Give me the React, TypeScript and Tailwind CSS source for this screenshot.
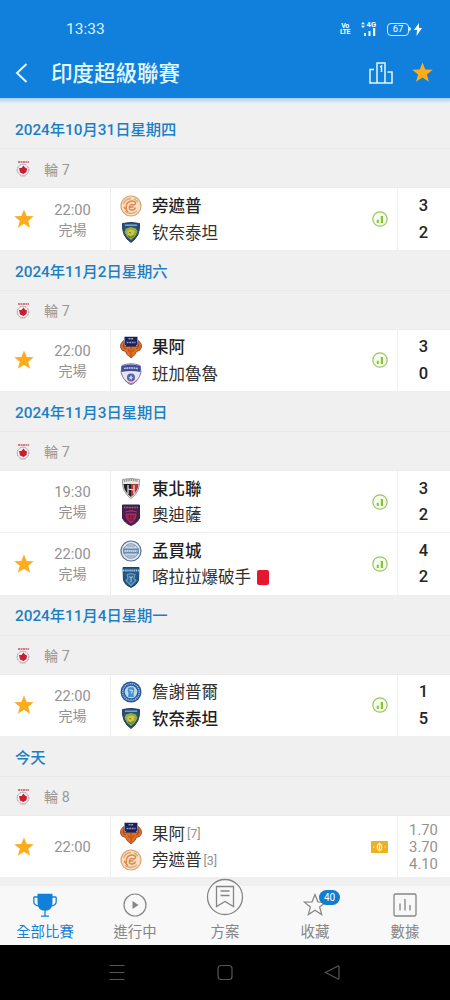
import React from 'react';

type Crest = 'punjab' | 'chennai' | 'goa' | 'bengaluru' | 'northeast' | 'odisha' | 'mumbai' | 'kerala' | 'jamshedpur';

interface Team {
  name: string;
  crest: Crest;
  winner?: boolean;
  redCard?: boolean;
  rank?: number;
}

interface Match {
  time: string;
  starred: boolean;
  home: Team;
  away: Team;
  score?: [number, number];
  odds?: string[];
}

interface Day {
  date: string;
  round: string;
  matches: Match[];
}

const days: Day[] = [
  {
    date: '2024年10月31日星期四',
    round: '輪 7',
    matches: [
      {
        time: '22:00',
        starred: true,
        home: { name: '旁遮普', crest: 'punjab', winner: true },
        away: { name: '钦奈泰坦', crest: 'chennai' },
        score: [3, 2]
      }
    ]
  },
  {
    date: '2024年11月2日星期六',
    round: '輪 7',
    matches: [
      {
        time: '22:00',
        starred: true,
        home: { name: '果阿', crest: 'goa', winner: true },
        away: { name: '班加魯魯', crest: 'bengaluru' },
        score: [3, 0]
      }
    ]
  },
  {
    date: '2024年11月3日星期日',
    round: '輪 7',
    matches: [
      {
        time: '19:30',
        starred: false,
        home: { name: '東北聯', crest: 'northeast', winner: true },
        away: { name: '奧迪薩', crest: 'odisha' },
        score: [3, 2]
      },
      {
        time: '22:00',
        starred: true,
        home: { name: '孟買城', crest: 'mumbai', winner: true },
        away: { name: '喀拉拉爆破手', crest: 'kerala', redCard: true },
        score: [4, 2]
      }
    ]
  },
  {
    date: '2024年11月4日星期一',
    round: '輪 7',
    matches: [
      {
        time: '22:00',
        starred: true,
        home: { name: '詹謝普爾', crest: 'jamshedpur' },
        away: { name: '钦奈泰坦', crest: 'chennai', winner: true },
        score: [1, 5]
      }
    ]
  },
  {
    date: '今天',
    round: '輪 8',
    matches: [
      {
        time: '22:00',
        starred: true,
        home: { name: '果阿', crest: 'goa', rank: 7 },
        away: { name: '旁遮普', crest: 'punjab', rank: 3 },
        odds: ['1.70', '3.70', '4.10']
      }
    ]
  }
];

const SHIELD = 'M2.5 2.5Q11 .5 19.500 2.500Q20.500 15 11 21.500Q1.500 15 2.500 2.500Z';

const crests: Record<Crest, React.ReactNode> = {
  punjab: (
    <>
      <circle cx="11" cy="11" r="10" fill="#f5dfc6" stroke="#dca46c" strokeWidth="1.200" />
      <path d="M3.500 9Q5 4 11 3.500M5 16.500Q11 20.500 17 16" fill="none" stroke="#e8a970" strokeWidth="1.500" />
      <path d="M6.500 14q-1-6 3-7.500t6 1q.5 2-2 2.500-3-1.500-4 1.500t2 3.500q3 .5 4-2.500M4 12l4 5M9.500 12h4" fill="none" stroke="#de8747" strokeWidth="1.400" />
      <path d="M14 3.500l4 3.500" stroke="#b9bd74" strokeWidth="1.500" />
    </>
  ),
  chennai: (
    <>
      <path d={SHIELD} fill="#245079" stroke="#243b5c" />
      <path d="M5 4.200h12" stroke="#7fa9c9" strokeWidth="1.500" />
      <path d="M6 7.500l5-1.500 5 1.500 1.500 3.500-2.500 4.500-4 3.500-4-3.500-2.500-4.500z" fill="#9bad3a" />
      <path d="M7.500 10l3-1.500 4 1-1 4-3 1.500-3-2z" fill="#d0c843" />
      <path d="M9 11.500l2 .5M8 15l3 1.500 3-2" fill="none" stroke="#5f7d48" strokeWidth="1.100" />
    </>
  ),
  goa: (
    <>
      <path d="M3.500 4.500Q-.5 8 .5 11.500q1 3.500 5 4l1.500 3 4 3.500 4-3.500 1.500-3q4-.5 5-4 1-3.500-3-7l-1 6H4.500z" fill="#e66d1e" stroke="#6e3a2c" strokeWidth=".7" />
      <path d="M4 8q-2 3 1.500 5M18 8q2 3-1.500 5" fill="none" stroke="#7c402b" />
      <path d="M4.500 .8h13V7.500L16 10.500H6L4.500 7.500z" fill="#1c2258" />
      <path d="M8.500 2.800h5M6.500 6.500h9" stroke="#8f99c7" strokeWidth="1.500" strokeDasharray="2 .6" />
      <path d="M11 11v10M8 13l1.500 3M14 13l-1.500 3" stroke="#a04d27" strokeWidth=".9" />
    </>
  ),
  bengaluru: (
    <>
      <path d="M2 2.500Q11-1 20 2.500L21 9Q19 18 11 22 3 18 1 9z" fill="#e6e5ef" stroke="#777bb0" />
      <path d="M1.500 3Q11 0 20.500 3v6Q11 7 1.500 9z" fill="#424d99" />
      <path d="M4 5.500q7-1 14 0" fill="none" stroke="#c9cce8" strokeWidth="1.600" strokeDasharray="1.800 .6" />
      <circle cx="11" cy="14.500" r="4" fill="#5265a6" />
      <path d="M11 12l1 2h2l-2 1v2l-1-1-2 1 1-2-2-1h2z" fill="#cdd5ee" />
      <path d="M5 17q6 7 12 0" fill="none" stroke="#d45268" />
    </>
  ),
  northeast: (
    <>
      <path d={SHIELD} fill="#e9e7e4" stroke="#858585" strokeWidth=".8" />
      <path d="M4 4q7-2 14 0" fill="none" stroke="#8a8a8a" strokeWidth="2.200" strokeDasharray="1 .8" />
      <path d="M3.500 7H11v13Q4 15 3.500 7z" fill="#242124" />
      <path d="M11 7h7.500Q18 15 11 20z" fill="#b9333b" />
      <path d="M8 8v9M14 8v9M8 12l6 1" stroke="#f2e9e7" strokeWidth="1.200" />
    </>
  ),
  odisha: (
    <>
      <path d="M2.500 1h17v13q-2 5-8.500 7.500Q4.500 19 2.500 14z" fill="#46204e" stroke="#39204c" />
      <path d="M4 3.500h14" stroke="#987199" strokeWidth="1.500" strokeDasharray="1 .6" />
      <path d="M5 8q6-3 12 0M6 10q0 6 5 9 5-3 5-9z" fill="#9a2353" stroke="#bd2c5c" />
      <path d="M9 11l1 3M13 11l-1 3M9 16h4" stroke="#5b2049" strokeWidth="1.200" />
    </>
  ),
  mumbai: (
    <>
      <circle cx="11" cy="11" r="10" fill="#dfe9f3" stroke="#5e718a" strokeWidth="1.200" />
      <circle cx="11" cy="11" r="7.300" fill="#c3d5e7" stroke="#8299b4" />
      <path d="M3 8.500h16v5H3z" fill="#6a8bae" />
      <path d="M4.500 11h13" stroke="#e9eff6" strokeWidth="1.400" strokeDasharray="1.500 .5" />
      <path d="M7 16h8M7 6h8" stroke="#8a9db4" />
    </>
  ),
  kerala: (
    <>
      <path d="M3 1.500h16l-.5 13Q17 19 11 21.500 5 19 3.500 14.500z" fill="#225684" stroke="#16446b" />
      <path d="M3 4.500h16" stroke="#a2c5d9" strokeWidth="2.200" strokeDasharray="1.500 .6" />
      <path d="M7 8.500l4-1 4 1-1 4 2 2-5 5-5-5 2-2z" fill="#2f6a9d" stroke="#6b9fc6" strokeWidth="1.100" />
      <path d="M9 10.500l2 1 2-1M11 11.500v5" fill="none" stroke="#a9cbe0" />
    </>
  ),
  jamshedpur: (
    <>
      <circle cx="11" cy="11" r="10.500" fill="#23599b" />
      <circle cx="11" cy="11" r="8.300" fill="none" stroke="#a4c3de" strokeWidth="1.400" strokeDasharray="1.200 .7" />
      <circle cx="11" cy="11" r="6.300" fill="#bbdaf0" />
      <path d="M8 7q3-2 6 0 1 3-.5 5l.5 4H8l.5-4Q7 10 8 7z" fill="#4a93cf" />
      <path d="M9.500 9l3 .5-1 3" stroke="#dff1fb" fill="none" />
    </>
  )
};

const STAR = 'M12 1.500l2.900 7.300 7.800.3-6.100 4.900 2.100 7.600-6.700-4.300-6.700 4.300 2.100-7.600-6.100-4.900 7.800-.3z';

const Star = ({ className }: { className: string }) => (
  <svg viewBox="0 0 24 24" className={className} fill="#ffac1c">
    <path d={STAR} />
  </svg>
);

const StatusBar = () => (
  <div className="flex h-[47px] items-start justify-between pl-[66px] pr-7 pt-5 text-white">
    <span className="text-[15.5px] leading-[18px] text-[#d9f1ff]">13:33</span>
    <div className="flex items-center pt-0.5">
      <div className="mr-[7px] flex w-[10px] flex-col items-center text-[7px] font-bold leading-[6.5px] tracking-[-0.4px]">
        <span>Vo</span>
        <span>LTE</span>
      </div>
      <div className="mr-[7px] flex w-[23px] flex-col items-end pr-1 text-[7.5px] font-bold leading-[6px]">
        <span className="flex items-center gap-0.5">
          <svg viewBox="0 0 4 6" className="h-1.5 w-1" fill="currentColor">
            <path d="M2 0l2 2.300H0zM2 6L0 3.700h4z" />
          </svg>
          4G
        </span>
        <svg viewBox="0 0 12 8" className="h-2 w-3" fill="currentColor">
          <path d="M0 5h2v3H0zM4.500 3h2v5h-2zM9 0h2.200v8H9z" />
        </svg>
      </div>
      <div className="flex h-[13px] w-[22px] items-center justify-center rounded-[4px] border border-[#c5edff] text-[9.5px] leading-none">67</div>
      <div className="mr-[3px] h-1 w-0.5 rounded-r bg-[#c5edff]"></div>
      <svg viewBox="0 0 8 13" className="h-[13px] w-2" fill="currentColor">
        <path d="M5 0L0 7h3L2.500 13 8 5H5z" />
      </svg>
    </div>
  </div>
);

const Header = () => (
  <header className="h-[98px] shrink-0 bg-[#1080dc]">
    <StatusBar />
    <div className="flex h-[51px] items-center pl-[15px] pr-4 text-[#e2f7ff]">
      <svg viewBox="0 0 13 20" className="h-5 w-[13px]" fill="none" stroke="currentColor" strokeWidth="2">
        <path d="M11.500 1L2 10l9.500 9" />
      </svg>
      <h1 className="ml-[23px] flex-1 pt-[3px] text-[21.5px] font-medium leading-none">印度超級聯賽</h1>
      <svg viewBox="0 0 24 22" className="mr-[18px] h-[22px] w-6" fill="none" stroke="currentColor" strokeWidth="1.500">
        <path d="M8 21V1h8v20M5 7.500H1V21h22V10h-4.500M11 5l1.500-1v6" />
      </svg>
      <Star className="h-[23px] w-[23px]" />
    </div>
  </header>
);

const LeagueLogo = () => (
  <svg viewBox="0 0 14 18" className="h-[18px] w-[14px]">
    <path d="M2 2h11" stroke="#cc5360" strokeWidth="1.600" strokeDasharray="2 .5" />
    <circle cx="7" cy="10" r="5.800" fill="#f7efef" stroke="#8d898f" strokeWidth="1" strokeDasharray="1.200 .6" />
    <path d="M3 8l2.500 0L7.500 5.500l1.500 2 2 1-.5 3.500-3 2-3.500-1.500z" fill="#c91e32" />
    <path d="M4 16q3 1 6 0" fill="none" stroke="#dec9cb" />
  </svg>
);

const StatsBadge = () => (
  <svg viewBox="0 0 16 16" className="h-4 w-4">
    <circle cx="8" cy="8" r="7.200" fill="#f6fceb" stroke="#9bc366" strokeWidth="1.200" />
    <path d="M4.800 8.700h2V12h-2zM8.800 5h2.200v7H8.800z" fill="#87c336" />
  </svg>
);

const OddsBadge = () => (
  <svg viewBox="0 0 17 12" className="h-3 w-[17px]">
    <rect width="17" height="12" rx="1" fill="#edb01f" />
    <ellipse cx="8.500" cy="6" rx="2.200" ry="3.200" fill="none" stroke="#fff4d0" strokeWidth="1.200" />
    <path d="M8.500 1.500v9M2 6h1.500M13.500 6H15" stroke="#fff4d0" />
  </svg>
);

const TeamLine = ({ team }: { team: Team }) => (
  <div className="flex h-[26.500px] items-center">
    <svg viewBox="0 0 22 22" className="mr-2.5 h-[22px] w-[22px] shrink-0">
      {crests[team.crest]}
    </svg>
    <span className={`pt-[3px] text-[16.5px] leading-none ${team.winner ? 'font-medium text-[#202020]' : 'text-[#303030]'}`}>
      {team.name}
    </span>
    {team.rank && <span className="ml-0.5 pt-0.5 text-[12.5px] leading-none text-[#929292]">[{team.rank}]</span>}
    {team.redCard && <span className="ml-1.5 mt-px h-[15px] w-3 rounded-xs bg-[#e3172f]"></span>}
  </div>
);

const MatchRow = ({ match }: { match: Match }) => (
  <div className="flex h-[62.3px] border-b border-[#efefef] bg-white">
    <div className="flex w-12 items-center pl-[13px]">
      {match.starred && <Star className="h-[22px] w-[22px]" />}
    </div>
    <div className="flex w-[49px] flex-col items-center justify-center pt-px text-[#929292]">
      <span className="text-[14.7px] leading-5">{match.time}</span>
      {match.score && <span className="text-[14px] leading-5">完場</span>}
    </div>
    <div className="ml-[13px] flex flex-1 flex-col justify-center border-l border-[#ededed] pl-[9px]">
      <TeamLine team={match.home} />
      <TeamLine team={match.away} />
    </div>
    <div className="flex w-[34px] items-center justify-center pr-px">
      {match.score ? <StatsBadge /> : <OddsBadge />}
    </div>
    <div className="flex w-[53px] flex-col items-center justify-center border-l border-[#f0f0f0] pr-px pt-px">
      {match.score?.map((goals, i) => (
        <span key={i} className="text-[16.5px] font-medium leading-[26.500px] text-[#252525]">{goals}</span>
      ))}
      {match.odds?.map((odd) => (
        <span key={odd} className="text-[14.8px] leading-[17px] text-[#929292]">{odd}</span>
      ))}
    </div>
  </div>
);

const DaySection = ({ day }: { day: Day }) => (
  <section>
    <div className="flex h-10 items-center border-b border-[#e9e9e9] pl-[15px] pt-[4px]">
      <h2 className="text-[15.3px] font-medium leading-none text-[#1b7fc6]">{day.date}</h2>
    </div>
    <div className="flex h-[39px] items-center border-b border-[#ebebeb] pl-4 pt-0.5 text-[#999]">
      <LeagueLogo />
      <span className="ml-3.5 pt-px text-[14.2px] leading-none">{day.round}</span>
    </div>
    {day.matches.map((match, i) => (
      <MatchRow key={i} match={match} />
    ))}
  </section>
);

const tabs = [
  {
    label: '全部比賽',
    icon: (
      <svg viewBox="0 0 24 24" className="h-6 w-6" fill="none" stroke="currentColor" strokeWidth="1.300">
        <path d="M4.500 .8h15V9q0 7-5 8.500h-5Q4.500 16 4.500 9z" fill="currentColor" stroke="none" />
        <path d="M5 4H1.500Q.7 4 .8 5v3.500q.2 4 5 4.500M19 4h3.500q.8 0 .7 1v3.500q-.2 4-5 4.500M12 17v6M8 23.200h8" />
      </svg>
    )
  },
  {
    label: '進行中',
    icon: (
      <svg viewBox="0 0 24 24" className="h-6 w-6" fill="none" stroke="currentColor" strokeWidth="1.200">
        <circle cx="12" cy="12" r="11" />
        <path d="M9.500 8l6 4-6 4z" fill="currentColor" stroke="none" />
      </svg>
    )
  },
  {
    label: '方案',
    icon: (
      <svg viewBox="0 0 38 38" className="-mt-[15px] mb-px h-[38px] w-[38px]" fill="none" stroke="currentColor" strokeWidth="1.300">
        <circle cx="19" cy="19" r="17.500" fill="#f8f8f8" />
        <path d="M10.500 8.500h17v20L19 23.500 10.500 28.500zM14.500 13h9M14.500 17.500h9" />
      </svg>
    )
  },
  {
    label: '收藏',
    badge: 40,
    icon: (
      <svg viewBox="0 0 24 24" className="h-6 w-6" fill="none" stroke="currentColor" strokeWidth="1.200">
        <path d={STAR} />
      </svg>
    )
  },
  {
    label: '數據',
    icon: (
      <svg viewBox="0 0 24 24" className="h-6 w-6" fill="none" stroke="currentColor" strokeWidth="1.300">
        <rect x="1" y="1" width="22" height="22" rx="1.500" />
        <path d="M7 10.500V17.500M12 6v11.500M17 12v5.500" />
      </svg>
    )
  }
];

const TabBar = () => (
  <nav className="grid h-[59px] shrink-0 grid-cols-5 bg-[#f8f8f8]">
    {tabs.map((tab, i) => (
      <div key={tab.label} className={`flex flex-col items-center pt-[7px] ${i === 0 ? 'text-[#1080d8]' : 'text-[#858585]'}`}>
        <div className="relative z-10">
          {tab.icon}
          {tab.badge && (
            <span className="absolute left-[16px] -top-[3px] flex h-[15px] w-[21px] items-center justify-center rounded-full bg-[#127dcc] text-[10px] leading-none text-white">
              {tab.badge}
            </span>
          )}
        </div>
        <span className="mt-[7px] text-[14.4px] leading-[18px]">{tab.label}</span>
      </div>
    ))}
  </nav>
);

const SystemNav = () => (
  <div className="flex h-[55px] shrink-0 items-center justify-between bg-black pl-[108px] pr-[109px] text-[#565656]">
    <svg viewBox="0 0 18 18" className="h-[18px] w-[18px]" fill="none" stroke="currentColor">
      <path d="M1.500 1.500h15M1.500 8.500h15M1.500 15.500h15" />
    </svg>
    <svg viewBox="0 0 18 18" className="h-[18px] w-[18px]" fill="none" stroke="currentColor" strokeWidth="1.200">
      <rect x="2" y="1.500" width="14" height="14" rx="3" />
    </svg>
    <svg viewBox="0 0 18 18" className="h-[18px] w-[18px]" fill="none" stroke="currentColor" strokeWidth="1.200">
      <path d="M15 2L2.500 8.500 15 15q1 .3 1-1V3q0-1.300-1-1z" />
    </svg>
  </div>
);

export default function App() {
  return (
    <div className="flex h-[1000px] w-[450px] flex-col overflow-hidden bg-[#f0f0f0] font-[Roboto,'Noto_Sans_CJK_TC',sans-serif]">
      <Header />
      <div className="h-[11.4px] shrink-0 bg-gradient-to-b from-[#a8cdef] via-[#edf1f5] to-[#edf1f5]"></div>
      <main className="min-h-0 flex-1">
        {days.map((day) => (
          <DaySection key={day.date} day={day} />
        ))}
      </main>
      <TabBar />
      <SystemNav />
    </div>
  );
}
